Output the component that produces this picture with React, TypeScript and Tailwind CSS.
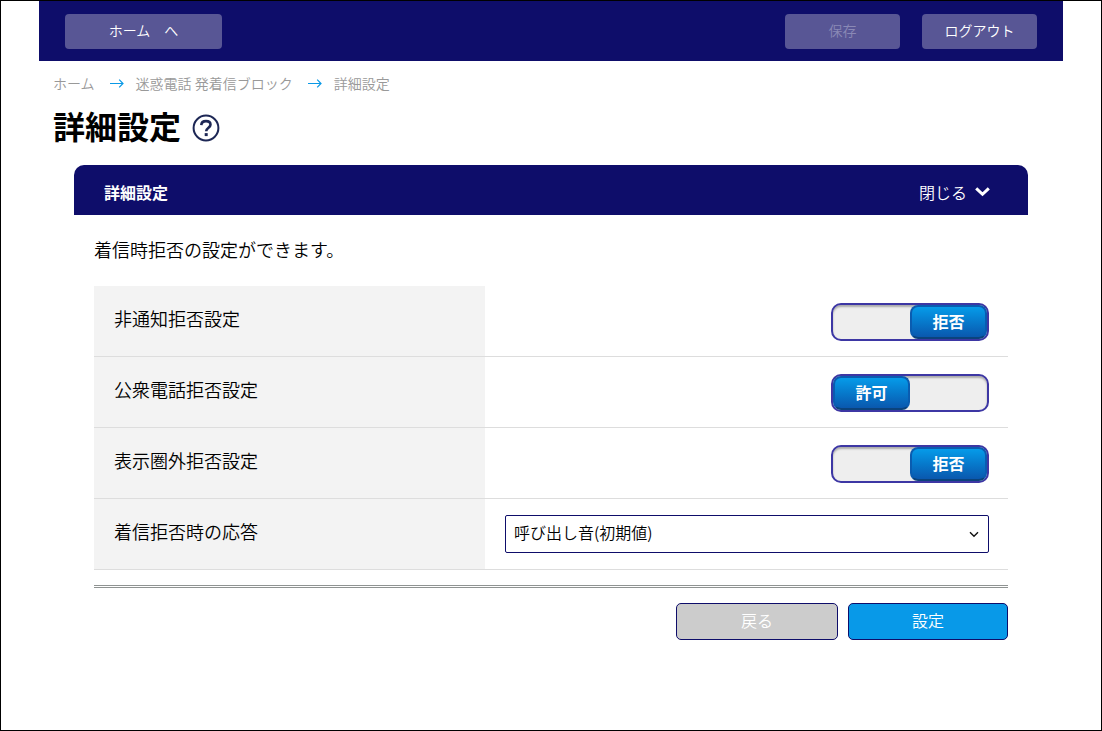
import { useState } from "react";

function CrumbArrow() {
  return (
    <svg className="mr-3 ml-[15px] h-3 w-3.5" viewBox="0 0 14 12" fill="none" stroke="#0a99e6" strokeWidth="1.2" aria-hidden="true">
      <path d="M0 6.5H13M9.2 2.7L13 6.5L9.2 10.3" />
    </svg>
  );
}

function HelpIcon() {
  return (
    <svg className="size-7" viewBox="0 0 28 28" fill="none" stroke="#1d2755" aria-hidden="true">
      <circle cx="14" cy="14" r="12.4" strokeWidth="2" />
      <path d="M9.3 11.1C9.4 8.3 11.3 7.1 14 7.1C16.7 7.1 18.5 8.5 18.5 10.7C18.5 13.6 14.2 13.8 14.2 17.2" strokeWidth="2.6" />
      <path d="M12.7 20.6H15.7" strokeWidth="3" />
    </svg>
  );
}

function DenySwitch({ id, initial }: { id: string; initial: boolean }) {
  const [denied, setDenied] = useState(initial);
  return (
    <label
      htmlFor={id}
      className="relative ml-auto flex h-[38px] w-[158px] cursor-pointer rounded-[10px] border-2 border-[#3d37a4] bg-[#eee] shadow-[inset_0_2px_2px_#aaa]"
    >
      <input
        id={id}
        type="checkbox"
        className="sr-only"
        checked={denied}
        onChange={(e) => setDenied(e.target.checked)}
      />
      <span
        className={
          (denied ? "ml-auto " : "mr-auto ") +
          "flex w-1/2 items-center justify-center rounded-lg border-2 border-[#0a5cb0] border-b-[#0b437c] bg-linear-to-b from-[#069be9] to-[#0a58ae] pb-0.5 text-base font-bold text-white"
        }
      >
        {denied ? "拒否" : "許可"}
      </span>
    </label>
  );
}

const switches = [
  { id: "anonymous", label: "非通知拒否設定", denied: true },
  { id: "payphone", label: "公衆電話拒否設定", denied: false },
  { id: "unavailable", label: "表示圏外拒否設定", denied: true },
];

export default function App() {
  const [open, setOpen] = useState(true);
  return (
    <div className="min-h-screen border border-black bg-white font-['Noto_Sans_CJK_JP',sans-serif] font-[350] text-black">
      <div className="mx-auto max-w-5xl">
        <header className="flex h-[60px] items-start gap-[22px] bg-[#0e0d6a] px-[26px] pt-[13px] text-sm text-white">
          <button type="button" className="mr-auto h-[35px] w-[157px] rounded bg-[#585695] pb-1">ホーム　へ</button>
          <button type="button" disabled className="h-[35px] w-[115px] rounded bg-[#585695] pb-1 text-[#8a89b6]">保存</button>
          <button type="button" className="h-[35px] w-[115px] rounded bg-[#585695] pb-1">ログアウト</button>
        </header>

        <nav aria-label="パンくず" className="flex h-11 items-center px-3.5 text-sm text-[#999]">
          <a href="#home">ホーム</a>
          <CrumbArrow />
          <a href="#block">迷惑電話 発着信ブロック</a>
          <CrumbArrow />
          <span>詳細設定</span>
        </nav>

        <div className="flex h-[46px] items-center gap-[11px] px-3.5">
          <h1 className="pb-1.5 text-[32px] leading-10 font-bold">詳細設定</h1>
          <button type="button" aria-label="ヘルプ"><HelpIcon /></button>
        </div>

        <main className="px-[35px] pt-3.5">
          <div className="flex h-[50px] items-center justify-between rounded-t-[10px] bg-[#0e0d6a] pt-1 pr-[38px] pl-[30px] text-base text-white">
            <h2 className="font-bold">詳細設定</h2>
            <button type="button" className="flex items-center gap-2" onClick={() => setOpen(!open)}>
              {open ? "閉じる" : "開く"}
              <svg className="h-4 w-[15px]" viewBox="0 0 15 16" fill="none" stroke="white" strokeWidth="3" aria-hidden="true">
                <path d="M1.2 4.3L7.5 10.3L13.8 4.3" />
              </svg>
            </button>
          </div>

          {open && (
            <form className="px-5" onSubmit={(e) => e.preventDefault()}>
              <p className="flex h-[71px] items-center pb-[3px] text-lg">着信時拒否の設定ができます。</p>
              <table className="w-full table-fixed border-separate border-spacing-0 text-lg">
                <colgroup>
                  <col className="w-[391px]" />
                  <col />
                </colgroup>
                <tbody>
                  {switches.map((s) => (
                    <tr key={s.id}>
                      <th scope="row" className="h-[71px] border-b border-[#ddd] bg-[#f3f3f3] px-5 pb-1.5 text-left font-[350]">
                        <label htmlFor={s.id}>{s.label}</label>
                      </th>
                      <td className="border-b border-[#ddd] pt-0.5 pr-[19px] pl-5">
                        <DenySwitch id={s.id} initial={s.denied} />
                      </td>
                    </tr>
                  ))}
                  <tr>
                    <th scope="row" className="h-[71px] border-b border-[#ddd] bg-[#f3f3f3] px-5 pb-1.5 text-left font-[350]">
                      <label htmlFor="response">着信拒否時の応答</label>
                    </th>
                    <td className="border-b border-[#ddd] pr-[19px] pl-5">
                      <div className="relative">
                        <select id="response" className="block h-[38px] w-full appearance-none rounded-xs border border-[#0e0d6a] bg-white pr-8 pb-1 pl-2 text-base">
                          <option>呼び出し音(初期値)</option>
                        </select>
                        <svg className="pointer-events-none absolute top-[15px] right-2.5 h-2 w-2.5" viewBox="0 0 10 8" fill="none" stroke="#111" strokeWidth="1.4" aria-hidden="true">
                          <path d="M1 2.3L5 6.3L9 2.3" />
                        </svg>
                      </div>
                    </td>
                  </tr>
                </tbody>
              </table>
              <div className="mt-[15px] flex justify-end gap-2.5 border-t-3 border-double border-[#8f9392] pt-[15px] text-base text-white">
                <button type="button" className="h-[37px] w-[162px] rounded-[5px] border border-[#0e0d6a] bg-[#ccc] pb-1">戻る</button>
                <button type="submit" className="h-[37px] w-40 rounded-[5px] border border-[#0e0d6a] bg-[#0899e8] pb-1">設定</button>
              </div>
            </form>
          )}
        </main>
      </div>
    </div>
  );
}
